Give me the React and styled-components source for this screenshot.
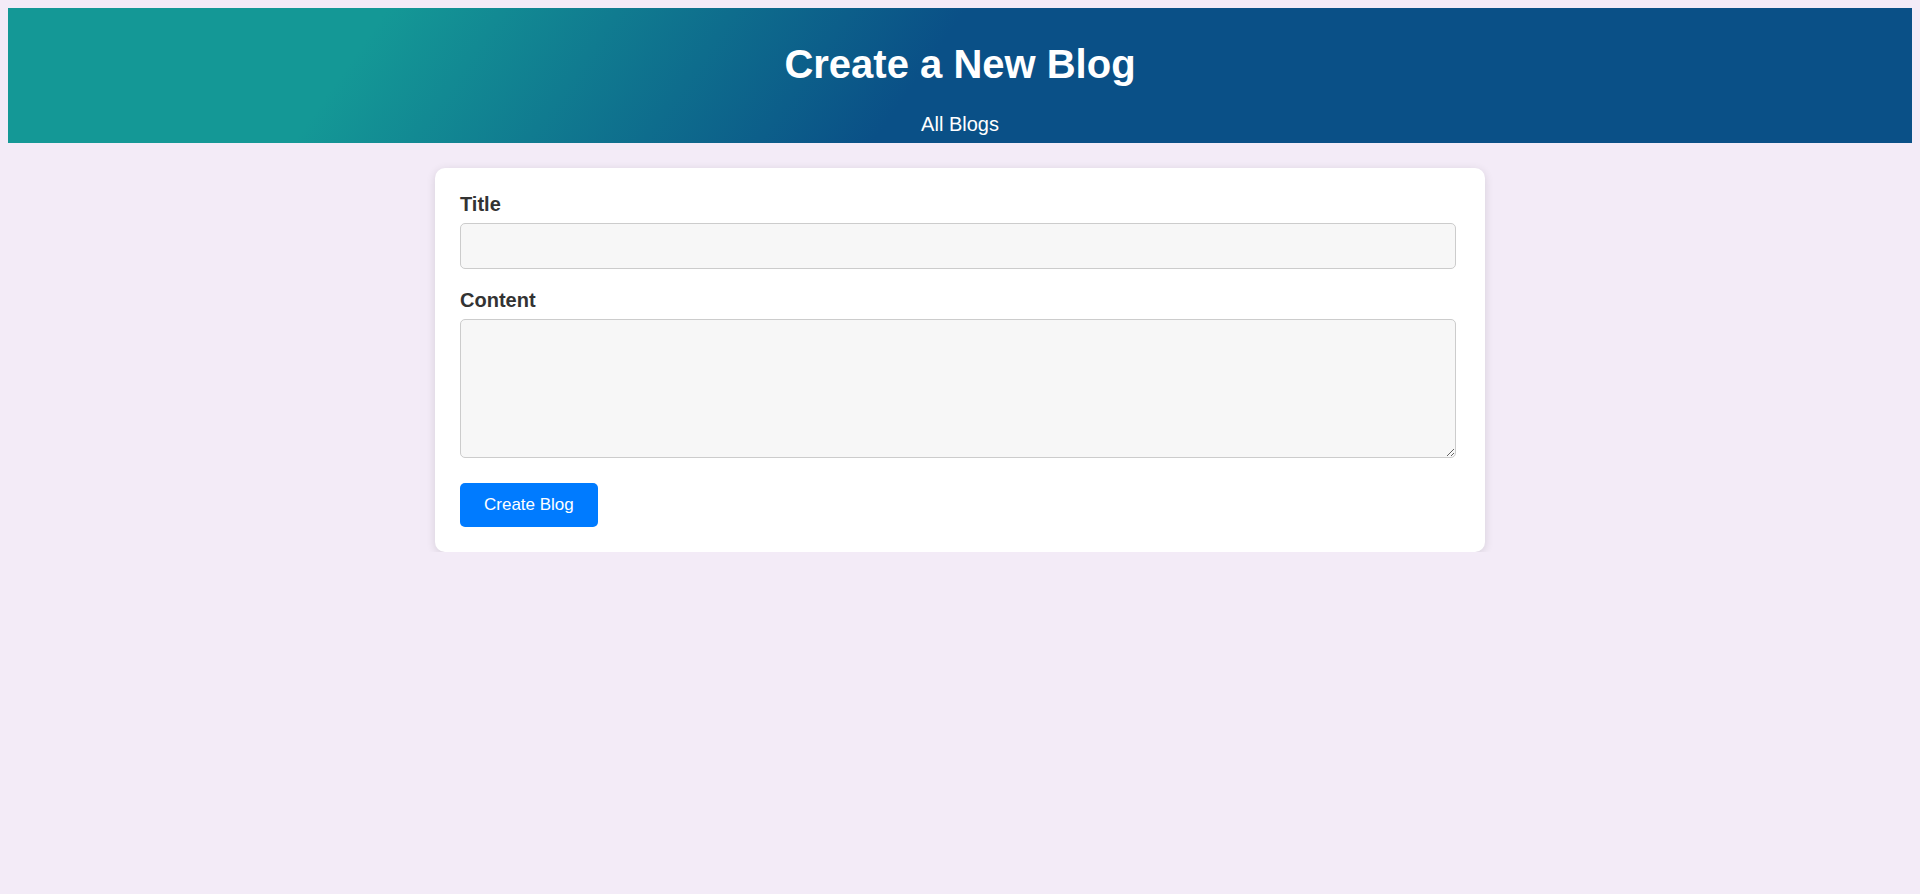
import React from "react";
import styled, { createGlobalStyle } from "styled-components";

const GlobalStyle = createGlobalStyle`
  html, body {
    background: #f3ebf7;
  }
  body {
    margin: 8px;
    font-family: "Liberation Sans", Arial, sans-serif;
    color: #333;
  }
`;

const Header = styled.header`
  background: linear-gradient(125deg, #149896 19%, #0a5087 48%);
  color: #fff;
  text-align: center;
  padding: 7px 0 7px;
`;

const PageTitle = styled.h1`
  margin: 26px 0;
  font-size: 40px;
  font-weight: 700;
  line-height: 46px;
`;

const Nav = styled.nav`
  display: flex;
  justify-content: center;
`;

const NavLink = styled.a`
  color: #fff;
  font-size: 20px;
  line-height: 23px;
  text-decoration: none;
  cursor: pointer;
`;

const Card = styled.form`
  width: 1000px;
  margin: 25px auto 0;
  padding: 25px;
  background: #fff;
  border-radius: 10px;
  box-shadow: 0 2px 10px rgba(0, 0, 0, 0.12);
`;

const Field = styled.div`
  margin-bottom: ${(p) => (p.$last ? "25px" : "20px")};
`;

const Label = styled.label`
  display: block;
  margin-bottom: 7px;
  font-size: 20px;
  line-height: 23px;
  font-weight: 700;
  color: #333;
`;

const Input = styled.input`
  display: block;
  box-sizing: border-box;
  width: 996px;
  height: 46px;
  padding: 10px;
  font-family: inherit;
  font-size: 16px;
  background: #f7f7f7;
  border: 1px solid #ccc;
  border-radius: 5px;
  outline: none;
`;

const TextArea = styled.textarea`
  display: block;
  box-sizing: border-box;
  width: 996px;
  height: 139px;
  padding: 10px;
  font-family: inherit;
  font-size: 16px;
  background: #f7f7f7;
  border: 1px solid #ccc;
  border-radius: 5px;
  outline: none;
`;

const Button = styled.button`
  display: block;
  height: 44px;
  padding: 0 24px;
  font-family: inherit;
  font-size: 17px;
  color: #fff;
  background: #007bff;
  border: none;
  border-radius: 5px;
  cursor: pointer;
`;

export default function App() {
  return (
    <>
      <GlobalStyle />
      <Header>
        <PageTitle>Create a New Blog</PageTitle>
        <Nav>
          <NavLink>All Blogs</NavLink>
        </Nav>
      </Header>
      <Card onSubmit={(e) => e.preventDefault()}>
        <Field>
          <Label htmlFor="title">Title</Label>
          <Input id="title" type="text" />
        </Field>
        <Field $last>
          <Label htmlFor="content">Content</Label>
          <TextArea id="content" />
        </Field>
        <Button type="submit">Create Blog</Button>
      </Card>
    </>
  );
}
